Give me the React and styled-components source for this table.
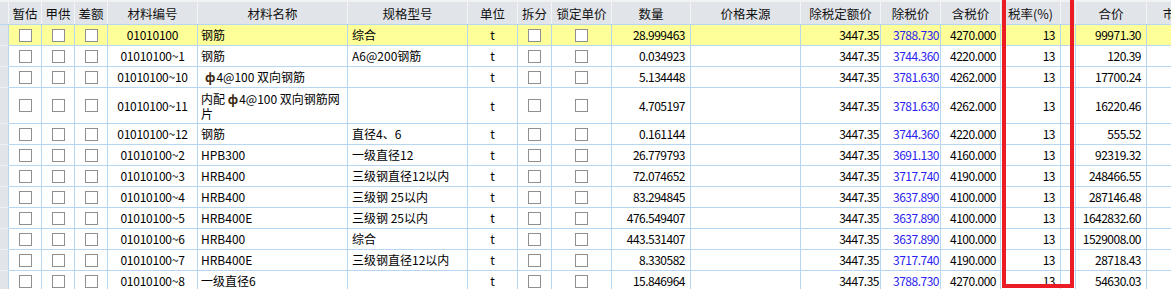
import React from "react";
import styled, { createGlobalStyle } from "styled-components";

const Global = createGlobalStyle`
  html, body { margin: 0; padding: 0; background: #ffffff; overflow: hidden; }
  body { font-family: "Noto Sans CJK SC", "Noto Sans", sans-serif; font-size: 12px; color: #000; }
`;

const COLS = "9px 33px 33px 33px 90px 150px 120px 50px 34px 60px 79px 110px 80px 60px 60px 60px 15px 71px 70px";
const GRID_LINE = "#b6d6f2";

const Frame = styled.div`
  position: relative;
  width: 1171px;
  height: 289px;
  overflow: hidden;
`;

const Table = styled.div`
  display: flex;
  flex-direction: column;
  width: 1224px;
`;

const HeaderRow = styled.div`
  display: grid;
  grid-template-columns: ${COLS};
  height: 25px;
  box-sizing: border-box;
  border-top: 2px solid #f1f2f4;
  border-bottom: 1px solid ${GRID_LINE};
  background: #e1e4e9;
`;

const HeadCell = styled.div`
  display: flex;
  align-items: center;
  justify-content: center;
  border-right: 1px solid #f4f5f7;
  white-space: nowrap;
  overflow: hidden;
  font-size: 12.5px;
  color: #111;
  padding-top: 1px;
`;

const Row = styled.div`
  display: grid;
  grid-template-columns: ${COLS};
  min-height: 21px;
  box-sizing: border-box;
  background: ${(p) => (p.$highlight ? "#ffff99" : "#ffffff")};
`;

const Gutter = styled.div`
  background: #e1e4e9;
  border-right: 1px solid ${GRID_LINE};
  border-bottom: 1px solid #eef0f3;
`;

const Cell = styled.div`
  display: flex;
  align-items: center;
  justify-content: ${(p) =>
    p.$align === "right" ? "flex-end" : p.$align === "left" ? "flex-start" : "center"};
  padding: ${(p) => (p.$align === "right" ? `0 ${p.$pad ?? 5}px 0 0` : p.$align === "left" ? `0 0 0 ${p.$pad ?? 3}px` : "0")};
  border-right: 1px solid ${GRID_LINE};
  border-bottom: 1px solid ${GRID_LINE};
  color: ${(p) => p.$color || "#000"};
  white-space: ${(p) => (p.$wrap ? "normal" : "nowrap")};
  line-height: ${(p) => (p.$wrap ? "15px" : "20px")};
  padding-top: ${(p) => (p.$wrap ? "2.5px" : "0")};
  padding-bottom: ${(p) => (p.$wrap ? "2.5px" : "0")};
  letter-spacing: ${(p) => (p.$num ? "-0.5px" : p.$code ? "-0.25px" : "0")};
  overflow: visible;
  min-width: 0;
`;

const Box = styled.span`
  display: inline-block;
  width: 13px;
  height: 13px;
  box-sizing: border-box;
  border: 1px solid #8f8f8f;
  background: #ffffff;
`;

const Phi = styled.span`
  font-weight: 700;
  color: #3a2a10;
  margin-right: 1px;
`;

const RedFrame = styled.div`
  position: absolute;
  left: 1002px;
  top: -6px;
  width: 72px;
  height: 294px;
  box-sizing: border-box;
  border: 4.5px solid #ec1c24;
  pointer-events: none;
`;

const headers = [
  "", "暂估", "甲供", "差额", "材料编号", "材料名称", "规格型号", "单位", "拆分", "锁定单价",
  "数量", "价格来源", "除税定额价", "除税价", "含税价", "税率(%)", "", "合价", "市场价",
];

const rows = [
  { code: "01010100", name: "钢筋", spec: "综合", qty: "28.999463", ex: "3788.730", inc: "4270.000", total: "99971.30", hl: true },
  { code: "01010100~1", name: "钢筋", spec: "A6@200钢筋", qty: "0.034923", ex: "3744.360", inc: "4220.000", total: "120.39" },
  { code: "01010100~10", name: "phi1", spec: "", qty: "5.134448", ex: "3781.630", inc: "4262.000", total: "17700.24" },
  { code: "01010100~11", name: "phi2", spec: "", qty: "4.705197", ex: "3781.630", inc: "4262.000", total: "16220.46" },
  { code: "01010100~12", name: "钢筋", spec: "直径4、6", qty: "0.161144", ex: "3744.360", inc: "4220.000", total: "555.52" },
  { code: "01010100~2", name: "HPB300", spec: "一级直径12", qty: "26.779793", ex: "3691.130", inc: "4160.000", total: "92319.32" },
  { code: "01010100~3", name: "HRB400", spec: "三级钢直径12以内", qty: "72.074652", ex: "3717.740", inc: "4190.000", total: "248466.55" },
  { code: "01010100~4", name: "HRB400", spec: "三级钢 25以内", qty: "83.294845", ex: "3637.890", inc: "4100.000", total: "287146.48" },
  { code: "01010100~5", name: "HRB400E", spec: "三级钢 25以内", qty: "476.549407", ex: "3637.890", inc: "4100.000", total: "1642832.60", mk: "1094.41" },
  { code: "01010100~6", name: "HRB400", spec: "综合", qty: "443.531407", ex: "3637.890", inc: "4100.000", total: "1529008.00", mk: "1094.41" },
  { code: "01010100~7", name: "HRB400E", spec: "三级钢直径12以内", qty: "8.330582", ex: "3717.740", inc: "4190.000", total: "28718.43" },
  { code: "01010100~8", name: "一级直径6", spec: "", qty: "15.846964", ex: "3788.730", inc: "4270.000", total: "54630.03" },
];

function Name({ value }) {
  if (value === "phi1") {
    return (
      <Cell $align="left" $pad={7}>
        <Phi>ф</Phi>4@100 双向钢筋
      </Cell>
    );
  }
  if (value === "phi2") {
    return (
      <Cell $align="left" $wrap>
        <span>
          内配 <Phi>ф</Phi>4@100 双向钢筋网
          <br />片
        </span>
      </Cell>
    );
  }
  return <Cell $align="left">{value}</Cell>;
}

export default function App() {
  return (
    <>
      <Global />
      <Frame>
        <Table>
          <HeaderRow>
            {headers.map((h, i) => (
              <HeadCell key={i}>{h}</HeadCell>
            ))}
          </HeaderRow>
          {rows.map((r, i) => (
            <Row key={i} $highlight={r.hl}>
              <Gutter />
              <Cell><Box /></Cell>
              <Cell><Box /></Cell>
              <Cell><Box /></Cell>
              <Cell $code>{r.code}</Cell>
              <Name value={r.name} />
              <Cell $align="left" $pad={4}>{r.spec}</Cell>
              <Cell>t</Cell>
              <Cell><Box /></Cell>
              <Cell><Box /></Cell>
              <Cell $align="right" $num>{r.qty}</Cell>
              <Cell />
              <Cell $align="right" $pad={1} $num>3447.35</Cell>
              <Cell $align="right" $pad={1} $num $color="#2a22f0">{r.ex}</Cell>
              <Cell $align="right" $pad={4} $num>{r.inc}</Cell>
              <Cell $align="right" $num>13</Cell>
              <Cell />
              <Cell $align="right" $num>{r.total}</Cell>
              <Cell $align="right" $num>{r.mk || ""}</Cell>
            </Row>
          ))}
        </Table>
        <RedFrame />
      </Frame>
    </>
  );
}
